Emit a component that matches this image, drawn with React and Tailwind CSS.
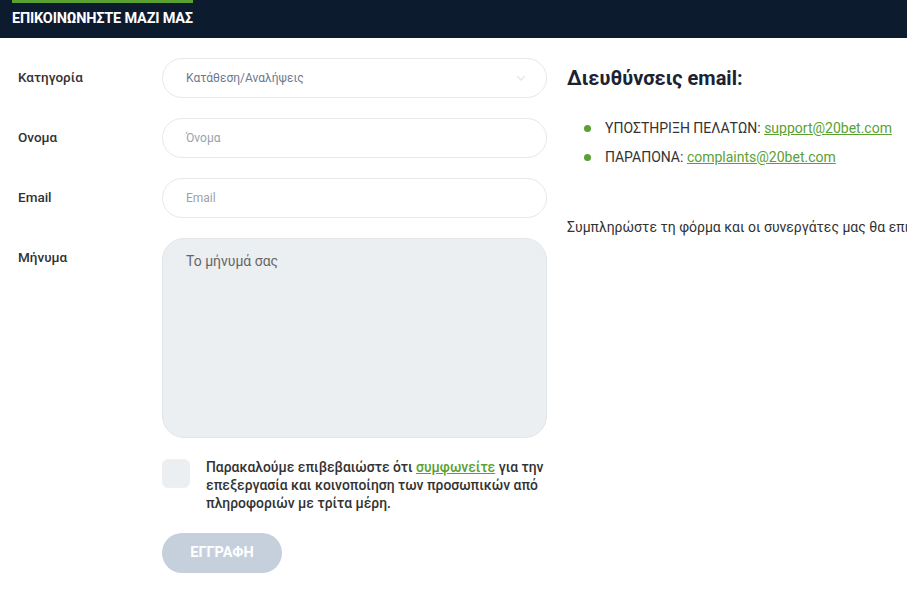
export default function App() {
  const fields = [
    { label: "Κατηγορία", kind: "select", value: "Κατάθεση/Αναλήψεις" },
    { label: "Ονομα", kind: "input", value: "Όνομα" },
    { label: "Email", kind: "input", value: "Email" },
  ];

  return (
    <div className="min-h-screen bg-white font-['Roboto',sans-serif] text-[#333] overflow-hidden">
      {/* Header */}
      <header className="h-[38px] bg-[#0d1b2f] px-3">
        <div className="relative inline-flex h-full items-center">
          <div className="absolute left-0 right-0 top-0 h-[3px] bg-[#5aa132]" />
          <h1 className="text-[14.5px] font-bold tracking-[-0.2px] text-white">
            ΕΠΙΚΟΙΝΩΝΗΣΤΕ ΜΑΖΙ ΜΑΣ
          </h1>
        </div>
      </header>

      <main className="flex gap-5 pl-[18px] pt-5">
        {/* Form */}
        <div className="w-[529px] shrink-0">
          {fields.map((f) => (
            <div key={f.label} className="mb-5 flex items-center">
              <label className="w-[144px] -mt-[1px] text-[13.5px] font-medium text-[#333]">{f.label}</label>
              <div className="flex h-10 flex-1 items-center justify-between rounded-full border border-[#e6e8ea] pl-[23px] pr-[20px]">
                <span className={f.kind === "select" ? "text-[12px] text-[#6b7a90]" : "text-[12px] text-[#9aa2ab]"}>
                  {f.value}
                </span>
                {f.kind === "select" && (
                  <svg width="10" height="7" viewBox="0 0 10 7" fill="none">
                    <path d="M1 1l4 4 4-4" stroke="#e4e7ea" strokeWidth="1.3" />
                  </svg>
                )}
              </div>
            </div>
          ))}

          <div className="flex items-start">
            <label className="w-[144px] pt-[9px] text-[13.5px] font-medium text-[#333]">Μήνυμα</label>
            <div className="h-[200px] flex-1 rounded-[22px] border border-[#e3e6e9] bg-[#eceff1] pl-[23px] pt-3 text-[14px] text-[#666]">
              Το μήνυμά σας
            </div>
          </div>

          <div className="ml-[144px] mt-5 flex gap-4">
            <div className="mt-[1px] h-[29px] w-[28px] shrink-0 rounded-md border border-[#eef0f2] bg-[#eceff1]" />
            <p className="text-[13.9px] font-medium leading-[18px] text-[#333]">
              Παρακαλούμε επιβεβαιώστε ότι{" "}
              <a className="text-[#5aa132] underline">συμφωνείτε</a> για την
              επεξεργασία και κοινοποίηση των προσωπικών από πληροφοριών με τρίτα μέρη.
            </p>
          </div>

          <button className="ml-[144px] mt-[21px] flex h-10 w-[120px] items-center justify-center rounded-full bg-[#c5d0dc] text-[14.5px] font-bold text-white">
            ΕΓΓΡΑΦΗ
          </button>
        </div>

        {/* Emails */}
        <div className="min-w-0 flex-1 pt-[5px]">
          <h2 className="text-[20px] font-bold text-[#1a2233]">Διευθύνσεις email:</h2>
          <ul className="mt-[25px] space-y-[8px] pl-[17px] text-[14px] text-[#333]">
            <li className="flex items-center gap-[14px]">
              <span className="h-[7px] w-[7px] rounded-full bg-[#5aa132]" />
              <span>
                ΥΠΟΣΤΗΡΙΞΗ ΠΕΛΑΤΩΝ: <a className="text-[#5aa132] underline">support@20bet.com</a>
              </span>
            </li>
            <li className="flex items-center gap-[14px]">
              <span className="h-[7px] w-[7px] rounded-full bg-[#5aa132]" />
              <span>
                ΠΑΡΑΠΟΝΑ: <a className="text-[#5aa132] underline">complaints@20bet.com</a>
              </span>
            </li>
          </ul>
          <p className="mt-[49px] whitespace-nowrap text-[14px] text-[#333]">
            Συμπληρώστε τη φόρμα και οι συνεργάτες μας θα επικοινωνήσουν μαζί σας το συντομότερο δυνατό.
          </p>
        </div>
      </main>
    </div>
  );
}
